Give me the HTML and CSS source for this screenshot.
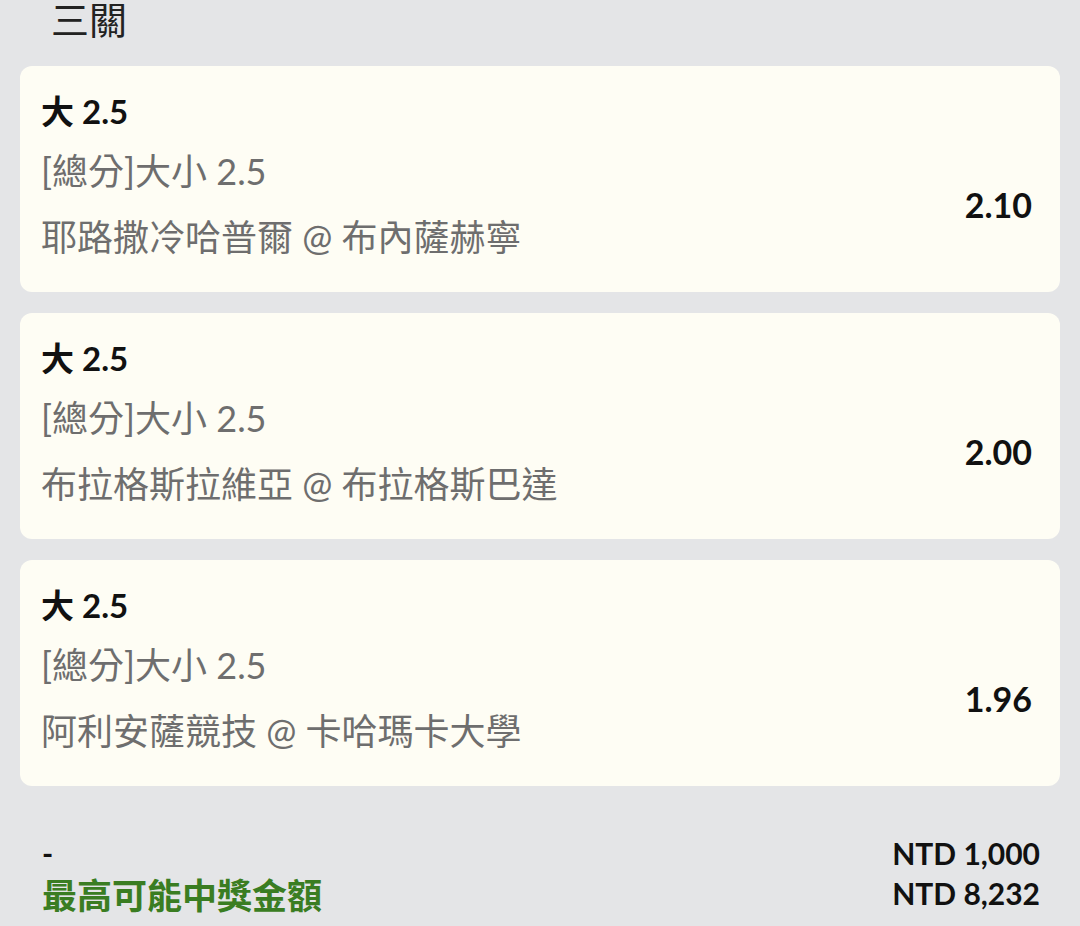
FILE: index.html
```html
<!DOCTYPE html>
<html lang="zh-Hant">
<head>
  <meta charset="UTF-8" />
  <meta name="viewport" content="width=device-width, initial-scale=1.0" />
  <title>三關</title>
  <link rel="stylesheet" href="styles.css">
</head>
<body>
  <h2 class="slip-title">三關</h2>

  <div class="leg">
    <div class="leg-pick">大 2.5</div>
    <div class="leg-body">
      <div class="leg-info">
        <div class="leg-market">[總分]大小 2.5</div>
        <div class="leg-match">耶路撒冷哈普爾 @ 布內薩赫寧</div>
      </div>
      <div class="leg-odds">2.10</div>
    </div>
  </div>

  <div class="leg">
    <div class="leg-pick">大 2.5</div>
    <div class="leg-body">
      <div class="leg-info">
        <div class="leg-market">[總分]大小 2.5</div>
        <div class="leg-match">布拉格斯拉維亞 @ 布拉格斯巴達</div>
      </div>
      <div class="leg-odds">2.00</div>
    </div>
  </div>

  <div class="leg">
    <div class="leg-pick">大 2.5</div>
    <div class="leg-body">
      <div class="leg-info">
        <div class="leg-market">[總分]大小 2.5</div>
        <div class="leg-match">阿利安薩競技 @ 卡哈瑪卡大學</div>
      </div>
      <div class="leg-odds">1.96</div>
    </div>
  </div>

  <div class="summary">
    <div class="summary-row">
      <span class="stake-label">-</span>
      <span class="amount">NTD 1,000</span>
    </div>
    <div class="summary-row">
      <span class="payout-label">最高可能中獎金額</span>
      <span class="amount">NTD 8,232</span>
    </div>
  </div>
</body>
</html>
```

FILE: styles.css
```css
body {
  margin: 0;
  padding: 0 20px;
  background: #e4e5e7;
  color: #111;
  font-family: Lato, "Noto Sans CJK TC", sans-serif;
  overflow: hidden;
}
.slip-title {
  margin: -6px 0 22px;
  padding-left: 31px;
  font-size: 38px;
  font-weight: 400;
  line-height: 50px;
  color: #222;
}
.leg {
  background: #fefdf4;
  border-radius: 12px;
  padding: 22px 28px 22px 21px;
  margin-bottom: 21px;
}
.leg-pick {
  font-size: 33px;
  font-weight: 700;
  line-height: 46px;
}
.leg-body {
  display: flex;
  align-items: center;
  justify-content: space-between;
  margin-top: 4px;
}
.leg-market, .leg-match {
  font-size: 36px;
  line-height: 66px;
  color: #6e6e6e;
}
.leg-odds {
  font-size: 34px;
  font-weight: 700;
}
.summary {
  margin-top: 47px;
  padding: 0 20px 0 22px;
}
.summary-row {
  display: flex;
  justify-content: space-between;
  align-items: center;
  height: 40px;
}
.stake-label {
  font-size: 30px;
  font-weight: 700;
}
.payout-label {
  font-size: 35px;
  font-weight: 700;
  color: #3a7d22;
}
.amount {
  font-size: 30px;
  font-weight: 700;
}
```
